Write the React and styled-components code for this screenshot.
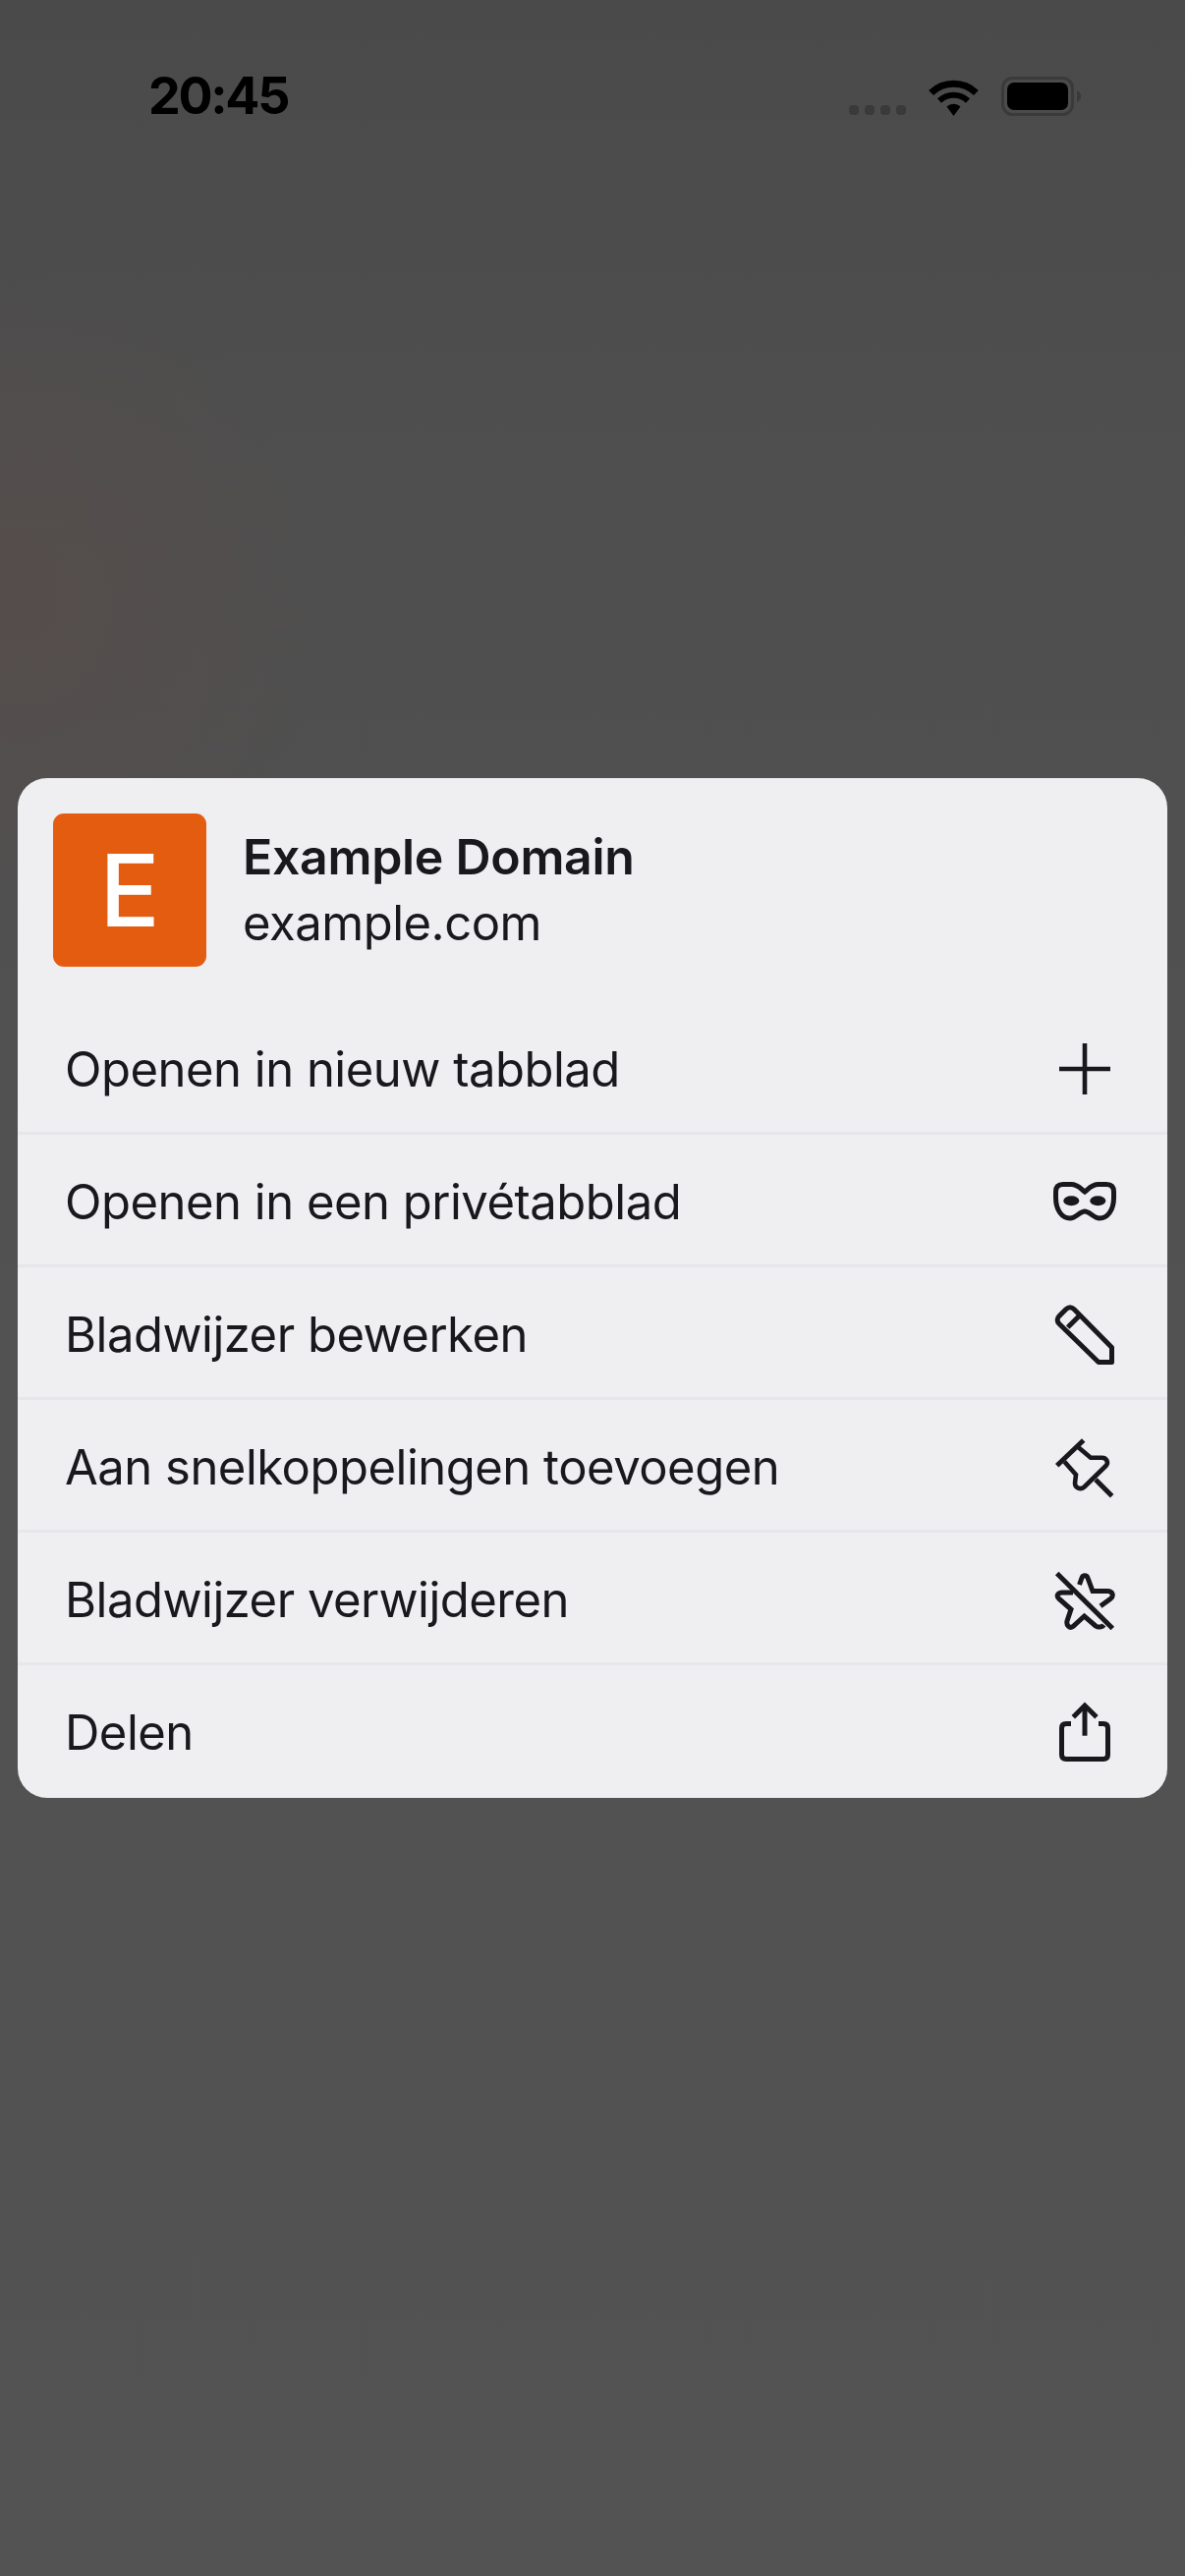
import React from "react";
import styled, { createGlobalStyle } from "styled-components";

const Global = createGlobalStyle`
  html, body { margin: 0; padding: 0; background: #4f4f4f; }
  * { box-sizing: border-box; }
`;

const Page = styled.div`
  width: 1206px;
  height: 2622px;
  overflow: hidden;
  font-family: Inter, "Noto Sans", sans-serif;
  background:
    radial-gradient(ellipse 320px 340px at 20px 610px, rgba(110, 70, 60, 0.2), rgba(110, 70, 60, 0) 100%),
    linear-gradient(180deg, #4a4a4a 0%, #4f4f4f 20%, #515151 45%, #535353 100%);
`;

const StatusBar = styled.header`
  height: 196px;
  padding: 69px 106px 0 151px;
  display: flex;
  justify-content: space-between;
  align-items: flex-start;
`;

const Time = styled.span`
  font-size: 52px;
  font-weight: 700;
  line-height: 58px;
  letter-spacing: -2.3px;
  color: #000;
`;

const Indicators = styled.div`
  display: flex;
  align-items: flex-end;
  height: 40px;
  margin-top: 9px;
`;

const Signal = styled.div`
  display: flex;
  gap: 6px;
  margin: 0 23px 1px 0;
`;

const SignalDot = styled.i`
  display: block;
  width: 10px;
  height: 10px;
  border-radius: 4px;
  background: #3a3a3a;
`;

const WifiIcon = styled.svg`
  width: 51px;
  height: 38px;
  margin-right: 23px;
`;

const BatteryIcon = styled.svg`
  width: 81px;
  height: 40px;
`;

const Card = styled.section`
  margin: 596px 18px 0;
  height: 1038px;
  background: #efeff2;
  border-radius: 30px;
  overflow: hidden;
`;

const Head = styled.div`
  display: flex;
  align-items: center;
  gap: 37px;
  padding: 36px;
`;

const Logo = styled.div`
  width: 156px;
  height: 156px;
  border-radius: 11px;
  background: #e45c10;
  color: #fff;
  font-size: 102px;
  font-weight: 500;
  display: flex;
  align-items: center;
  justify-content: center;
`;

const HeadText = styled.div`
  display: flex;
  flex-direction: column;
  gap: 4px;
  color: #18181d;
`;

const Title = styled.div`
  font-size: 50px;
  font-weight: 600;
  line-height: 63px;
  letter-spacing: -0.3px;
`;

const Subtitle = styled.div`
  font-size: 49px;
  font-weight: 400;
  line-height: 63px;
  letter-spacing: -0.5px;
`;

const Row = styled.div`
  height: 135px;
  padding: 0 52px 0 48px;
  display: flex;
  align-items: center;
  justify-content: space-between;
  box-shadow: ${(p) => (p.$last ? "none" : "inset 0 -3px 0 #e7e7eb")};
`;

const Label = styled.span`
  font-size: 49px;
  font-weight: 400;
  letter-spacing: -0.5px;
  line-height: 60px;
  padding-top: 3px;
  color: #18181d;
`;

const Icon = styled.svg`
  width: 64px;
  height: 64px;
  flex: none;
  fill: none;
  stroke: #18181d;
  stroke-width: 5;
`;

const icons = {
  plus: <path d="M32 6V58M6 32H58" strokeWidth="4.6" />,
  mask: (
    <>
      <path d="M32 22C28 19 25 14.5 18 14.5H10C5 14.5 2.5 17 2.5 22V28C2.5 41 9 49 17 49C23 49 27 42 32 42C37 42 41 49 47 49C55 49 61.5 41 61.5 28V22C61.5 17 59 14.5 54 14.5H46C39 14.5 36 19 32 22Z" />
      <ellipse cx="18.3" cy="31.3" rx="8" ry="5" fill="#18181d" stroke="none" />
      <ellipse cx="45.3" cy="31.3" rx="8" ry="5" fill="#18181d" stroke="none" />
    </>
  ),
  pencil: (
    <>
      <path d="M59.5 60.5H46L6 21.5C3.5 19 3.5 16 6 13.5L13 6.5C15.5 4 18.5 4 21 6.5L59.5 45.5Z" strokeLinejoin="round" />
      <path d="M14.7 25L28 11.7" />
    </>
  ),
  pin: (
    <>
      <path d="M3.7 30.7L30.7 5" />
      <path d="M25 11.7L38 22.7H49.5C54.5 22.7 56.5 28 53.5 31L31.5 52.5C27.5 56 22 53.5 22 48.5L23 40L11.3 26.7" strokeWidth="4.6" />
      <path d="M43 45L59.7 61.7" />
    </>
  ),
  starOff: (
    <>
      <path d="M3.7 5.5L60.3 61.5" />
      <path d="M26.5 17L29 10C30 7 34 7 35 10L40 23.5H55C60.5 23.5 62 28.5 58 31.5L48 38.8" />
      <path d="M20 25H9C4.5 25 2.5 28.5 6 31.5L18 42L14 54C13 58 16.5 62 20 59.5L31.5 49L43 59C46 61 50 60 51.5 58" />
    </>
  ),
  share: (
    <>
      <path d="M32 6.7V35.7" />
      <path d="M20.3 16.7L32 5L44 16.7" />
      <path d="M18 23.5H13C10 23.5 8.5 25 8.5 28V55C8.5 58 10 59.5 13 59.5H51C54 59.5 55.5 58 55.5 55V28C55.5 25 54 23.5 51 23.5H46" />
    </>
  ),
};

const rows = [
  ["Openen in nieuw tabblad", "plus"],
  ["Openen in een privétabblad", "mask"],
  ["Bladwijzer bewerken", "pencil"],
  ["Aan snelkoppelingen toevoegen", "pin"],
  ["Bladwijzer verwijderen", "starOff"],
  ["Delen", "share"],
];

export default function App() {
  return (
    <Page>
      <Global />
      <StatusBar>
        <Time>20:45</Time>
        <Indicators>
          <Signal>
            <SignalDot />
            <SignalDot />
            <SignalDot />
            <SignalDot />
          </Signal>
          <WifiIcon viewBox="0 0 51 38">
            <g fill="none" stroke="#000">
              <path d="M2.6 14.6A33 33 0 0 1 48.4 14.6" strokeWidth="7" />
              <path d="M11 22.5A21 21 0 0 1 40 22.5" strokeWidth="6" />
            </g>
            <path d="M18.5 28.5A10.5 10.5 0 0 1 32.5 28.5L25.5 38Z" fill="#000" />
          </WifiIcon>
          <BatteryIcon viewBox="0 0 81 40">
            <rect x="1.5" y="1.5" width="71" height="37" rx="10" fill="none" stroke="#3a3a3a" strokeWidth="3" />
            <rect x="6" y="6" width="62" height="28" rx="7" fill="#000" />
            <path d="M77 14C79.5 15 81 17 81 20S79.5 25 77 26Z" fill="#3a3a3a" />
          </BatteryIcon>
        </Indicators>
      </StatusBar>
      <Card>
        <Head>
          <Logo>E</Logo>
          <HeadText>
            <Title>Example Domain</Title>
            <Subtitle>example.com</Subtitle>
          </HeadText>
        </Head>
        {rows.map(([label, icon], i) => (
          <Row key={label} $last={i === rows.length - 1}>
            <Label>{label}</Label>
            <Icon viewBox="0 0 64 64">{icons[icon]}</Icon>
          </Row>
        ))}
      </Card>
    </Page>
  );
}
